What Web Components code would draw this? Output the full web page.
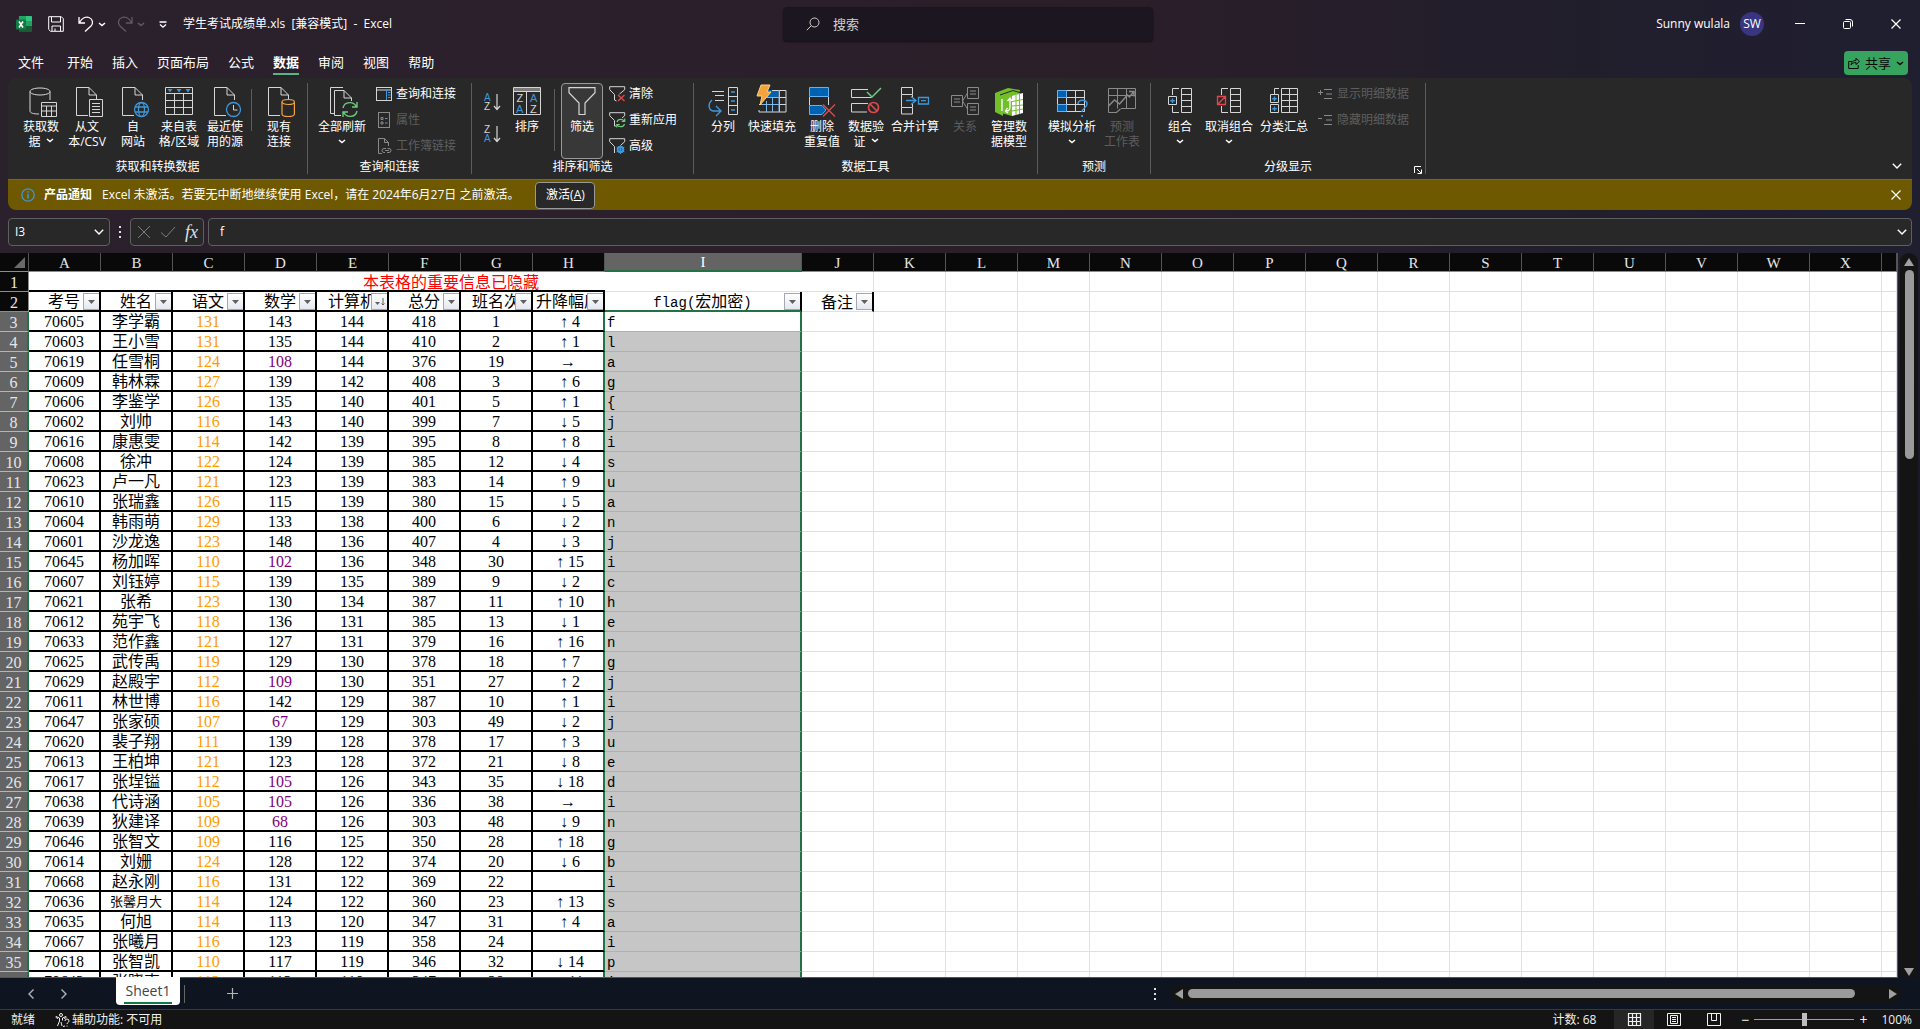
<!DOCTYPE html>
<html lang="zh-CN">
<head>
<meta charset="utf-8">
<title>学生考试成绩单.xls - Excel</title>
<style>
html,body{height:100%;margin:0}
body{overflow:hidden;background:#221e2c;color:#fff;font:12px/16px "Open Sans","Noto Sans CJK SC",sans-serif}
</style>
</head>
<body>
<excel-window></excel-window>
<script>
const RESET = `*{box-sizing:border-box}button{font:inherit;color:inherit;background:none;border:0;padding:0;margin:0}a{color:inherit;text-decoration:none}svg{display:block}`;
function define(name, css, html, after) {
  const tpl = document.createElement('template');
  tpl.innerHTML = `<style>${RESET}${css}</style>${html}`;
  customElements.define(name, class extends HTMLElement {
    constructor() {
      super();
      this.attachShadow({ mode: 'open' }).appendChild(tpl.content.cloneNode(true));
    }
    connectedCallback() { if (after) after(this, this.shadowRoot); }
  });
}
function makeIcon(name, cls) {
  const n = document.createElement('x-icon');
  n.setAttribute('name', name);
  if (cls) n.className = cls;
  return n;
}

/* name: [width, height, markup, optional left inset inside the box] */
const W = '#d6d6d6', B = '#3f97d8', G = '#6ccb7c', R = '#e0474c';
const doc = `<path d="M13 28.5H1.500V.5H14L21.500 8V13M14 .5V8H21.500"/>`;
const ICONS = {
  caret: [8, 5, `<path d="M1 1l3 2.600L7 1" stroke-width="1.500"/>`],
  chevron: [10, 6, `<path d="M.8.8L5 5 9.200.8" stroke-width="1.400"/>`],
  excel: [16, 16, `<g stroke="none"><rect x="3" width="13" height="16" rx="1" fill="#185c37"/><path d="M3 0h7v5H3z" fill="#21a366"/><path d="M10 0h5q1 0 1 1v4h-6z" fill="#33c481"/><path d="M10 5h6v5h-6z" fill="#21a366"/><path d="M3 5h7v5H3z" fill="#107c41"/><rect y="3.500" width="10" height="10" rx="1" fill="#107c41"/></g><path d="M3 5.500l4 6M7 5.500l-4 6" stroke="#fff" stroke-width="1.600"/>`],
  save: [16, 16, `<path d="M.7.7h12.600l2 2v12.600H2.500L.7 13.500zM3.500 1v5h9V1M4 15v-5h8.500v5M7 15v-2.500"/>`],
  undo: [16, 16, `<path d="M1 1v6h6M1.500 6.500C4 2 8 .5 11 1.500c4 1.500 4.500 6 2 8.500l-6 5.500" stroke-width="1.300"/>`],
  redo: [16, 16, `<path d="M15 1v6H9M14.500 6.500C12 2 8 .5 5 1.500 1 3 .5 7.500 3 10l6 5.500" stroke-width="1.300"/>`],
  qat: [8, 7, `<path d="M.5 1h7M1 3.500L4 6.200 7 3.500" stroke-width="1.300"/>`],
  search: [14, 14, `<circle cx="8.500" cy="5.500" r="4.500"/><path d="M5.200 8.800L.8 13.200"/>`],
  min: [10, 10, `<path d="M0 4.500h10"/>`],
  restore: [10, 10, `<rect x=".5" y="2.500" width="7" height="7" rx="1"/><path d="M2.500.5H7q2.500 0 2.500 2.500v4.500"/>`],
  close: [10, 10, `<path d="M.5.5l9 9M9.500.5l-9 9" stroke-width="1.200"/>`],
  share: [12, 12, `<path d="M4 4.500H.7v7h9.500V8M3 8c.5-3.500 2.500-4.500 5-4.500V1.200l3.300 3.300L8 7.500V5.500c-2 0-3.500.5-5 2.500z"/>`],
  getdata: [32, 30, `<path d="M10 27C4 27 1 26 1 24V4.500C1 2.500 5.500 1 11 1s10 1.500 10 3.500V13M1 4.500C1 6.500 5.500 8 11 8s10-1.500 10-3.500"/><path d="M12.500 15.500h15v14h-15zM12.500 19h15M12.500 24h15M17.500 19v11M22.500 19v11"/>`, 4],
  csv: [32, 30, `${doc}<path fill="#282828" d="M14.500 12.500h13v17h-13zM17 16.500h8M17 19.500h8M17 22.500h8M17 25.500h8"/>`, 4],
  web: [32, 30, `${doc}<g stroke="${B}" stroke-width="1.300"><circle fill="#282828" cx="20.500" cy="22.500" r="7"/><ellipse cx="20.500" cy="22.500" rx="3" ry="7"/><path d="M14 20h13M14 25h13"/></g>`, 4],
  table: [28, 30, `<path d="M.5.5h27v27H.5zM.5 6.500h27M.5 13.500h27M.5 20.500h27M9.500 6.500v21M18.500 6.500v21"/><path d="M2.500 2h5L5 5.500zM11.500 2h5L14 5.500zM20.500 2h5L23 5.500z" fill="${B}" stroke="none"/>`],
  recent: [32, 30, `${doc}<circle cx="20.500" cy="22.500" r="7" fill="#282828" stroke="${B}" stroke-width="1.300"/><path d="M20.500 18v5h4"/>`, 4],
  conn: [32, 30, `${doc}<g stroke="#f2a33c" fill="#282828" stroke-width="1.200"><path d="M15 15v12c0 1.500 3 2.500 6.200 2.500s6.200-1 6.200-2.500V15"/><ellipse cx="21.200" cy="15" rx="6.200" ry="2.500"/></g>`, 4],
  refresh: [32, 30, `<path d="M4 26.500H.5V.5H13M11 28.500H4.500V3.500H14L21.500 11v3M14 3.500V11H21.500"/><g stroke="${G}" stroke-width="1.400"><path d="M13 21c1.500-7 11-7 13.500-1M27 15v5h-5M27 24c-1.500 7-11 7-13.500 1M13 30v-5h5"/></g>`, 4],
  queries: [16, 14, `<rect x=".5" y=".5" width="15" height="13"/><path d="M.5 3h15" /><path d="M10.500 3v10M12 5.500h2.500M12 8h2.500M12 10.500h2.500" stroke="${B}"/>`],
  props: [16, 16, `<rect x="2.500" y=".5" width="11" height="15"/><path d="M5 5.500h2v2H5zM5 10h2v2H5zM9 6.500h2.500M9 11h2.500"/>`],
  links: [16, 16, `<path d="M6 15.500H2.500V.5h6l4 4V8M8.500.5v4h4"/><path d="M9 14.500H8a2 2 0 010-4h2M11.500 10.500h1.500a2 2 0 010 4h-2M9 12.500h4"/>`],
  az: [17, 18, `<g stroke="none" font-family="Liberation Sans" font-size="10"><text x="0" y="8" fill="${B}">A</text><text x="0" y="17" fill="${W}">Z</text></g><path d="M13 1v15M10 13l3 3.500 3-3.500" stroke-width="1.200"/>`],
  za: [17, 18, `<g stroke="none" font-family="Liberation Sans" font-size="10"><text x="0" y="8" fill="${W}">Z</text><text x="0" y="17" fill="${B}">A</text></g><path d="M13 1v15M10 13l3 3.500 3-3.500" stroke-width="1.200"/>`],
  sort: [28, 30, `<path d="M.5.5h27v27H.5zM.5 4.500h27M13.500 4.500v23"/><path d="M1 1h26v3H1z" fill="#7c7c7c" stroke="none"/><g stroke="none" font-family="Liberation Sans" font-size="11"><text x="3.500" y="15" fill="${W}">Z</text><text x="3" y="25.500" fill="${B}">A</text><text x="17" y="15" fill="${B}">A</text><text x="17" y="25.500" fill="${W}">Z</text></g>`],
  filter: [28, 30, `<path d="M1 .7h26v5L17 16v11.500h-6V16L1 5.700z" stroke-width="1.200"/>`],
  clear: [16, 16, `<path d="M.7.7h15v3L10.500 8M5.500 14V8.500L.7 3.700V.7M5.500 14l2 1"/><path d="M9 9l6.500 6M15.500 9L9 15" stroke="${R}" stroke-width="1.400"/>`],
  reapply: [16, 16, `<path d="M.7.7h15v3L13 6M5.500 14V8.500L.7 3.700V.7M5.500 14h1.500"/><path d="M8 10c1-3.500 6-3.500 7.500-.5M15.700 6.500v3h-3M15.500 12c-1 3.500-6 3.500-7.500.5M7.800 15.500v-3h3" stroke="${G}" stroke-width="1.200"/>`],
  advanced: [16, 16, `<path d="M.7.7h15v3L12 7M5.500 15V8.500L.7 3.700V.7"/><g stroke="${B}"><circle cx="11.500" cy="11.500" r="2.800" stroke-width="2"/><path d="M11.500 7v9M7.600 9.200l7.800 4.600M15.400 9.200l-7.800 4.600"/></g>`],
  split: [30, 30, `<path d="M4 4.500h12M7 8.500h9M7 13.500h9"/><path d="M20.500.5h9v27h-9zM20.500 9.500h9M20.500 18.500h9"/><path d="M23 5h4M23 14h4M23 23h4" stroke="${B}" stroke-width="1.300"/><path d="M4 13c-4 3-4 10 1 11h7M8 19l5 5-5 5" stroke="${B}" stroke-width="1.400"/>`],
  flash: [30, 30, `<g transform="translate(0 -2)"><path d="M10 5h11v7H10z" fill="#0063b1" stroke="none"/><path d="M2 25v2h27V5.500H15M2 19.500h27M12 12.500h17M22.500 5.500V27"/><path d="M9.500 16v11M15.500 12v15M22 5v22M3 19.500h19M10 12.500h12" stroke="#7db9ec"/><path d="M4 0h9l-3 7h4L3 20l2-9H0z" fill="#f2a33c" stroke="#ffd27a"/></g>`],
  dup: [28, 30, `<path d="M1.500.5h19v9h-19z" fill="#0063b1" stroke="#68b1ee"/><path d="M1.500 10v8M20.500 10v8"/><path d="M1.500 18.500H14l4 4.500-4 4.500H1.500z" fill="#0063b1" stroke="#68b1ee"/><path d="M15 17.500L27 29.500M27 17.500L15 29.500" stroke="${R}" stroke-width="1.400"/>`],
  valid: [30, 30, `<path d="M17 2.500H.5v8h20M17 16.500H.5v8.500H16"/><path d="M16 5l5 5 9-9" stroke="${G}" stroke-width="1.500"/><circle cx="22.500" cy="20.500" r="5" stroke="${R}" stroke-width="1.700"/><path d="M19 17l7 7" stroke="${R}" stroke-width="1.700"/>`],
  consol: [28, 30, `<path d="M.5.5h11v7H.5zM.5 7.500v13h11M.5 20.500v6.500h11v-6.500M11.500 8v2M11.500 17v3"/><path d="M5 13.500h10M10 9.500l5 4-5 4M17.500 10.500h10v6.500h-10zM20 13.700h5" stroke="${B}" stroke-width="1.300"/>`],
  relation: [28, 30, `<path d="M.5 8.500h11v11H.5zM16.500.5h11v11h-11zM16.500 16.500h11v11h-11zM3 12h6M3 15h6M19 4h6M19 7h6M19 20h6M19 23h6M11.500 14l5-8M11.500 14l5 8"/>`],
  model: [30, 30, `<path d="M1 6L14 1l12 2-1 4-12 3-4 5v14L1 25z" fill="#72bf2b" stroke="none"/><path d="M7 8l13-5 9 5v16l-11 5-11-3z" fill="#72bf2b" stroke="none"/><path d="M6 8l13-4.500 10 3" stroke="#282828"/><path d="M18 9l11-3v20l-11 3z" fill="#fff" stroke="none"/><path d="M18 14.500l11-2M18 19l11-1M18 24l11-2M22 8v20M25.500 7v20" stroke="#72bf2b"/><path d="M8 12v12M12 24c4 0 4-2 4-6v-6M13.500 14l2.500-3 2 3M13.500 21l-2 3 2.500 2" stroke="#fff" stroke-width="1.300"/>`],
  whatif: [30, 30, `<path d="M.5 3.500h27v21H.5zM.5 10.500h27M.5 17.500h27M9.500 3.500v21M18.500 3.500v21"/><path d="M.5 3.500h9v7h-9zM.5 17.500h9v7h-9z" fill="#0063b1" stroke="#68b1ee"/><path d="M21 17c0-5 9-5 9 0 0 4-5 4-5 8" stroke="${B}" stroke-width="1.500"/><path d="M24.200 28h1.800v2h-1.800z" fill="${B}" stroke="none"/>`],
  forecast: [28, 30, `<path d="M.5 1.500h27v20H13l-4 4H.5zM.5 8.500h27M9.500 1.500v20M18.500 1.500v20M8 25.500l4-3.500"/><path d="M.5 19l6-6 5 4 8-9 2 2 4-5M21 4.500h5v5" stroke-width="1.500"/>`],
  group: [26, 30, `<path d="M14.500 1.500h10v24h-10zM14.500 7.500h10M14.500 13.500h10M14.500 19.500h10M12 1.500H5.500V8M5.500 19v6.500H12"/><path d="M1.500 9.500h8v8h-8z"/><path d="M5.500 11.500v4.500M3.300 13.700h4.500" stroke="${B}" stroke-width="1.400"/>`],
  ungroup: [26, 30, `<path d="M14.500 1.500h10v24h-10zM14.500 7.500h10M14.500 13.500h10M14.500 19.500h10M12 1.500H5.500V8M5.500 19v6.500H12"/><path d="M1.500 9.500h8v8h-8zM1.500 17.500l8-8" stroke="${R}" stroke-width="1.300"/>`],
  subtotal: [30, 30, `<path d="M12.500 1.500h16v24h-16zM12.500 7.500h16M12.500 13.500h16M12.500 19.500h16M20.500 1.500v24M10 1.500H5.500V7"/><path d="M1.500 7.500h8v8h-8zM1.500 17.500h8v8h-8z"/><path d="M5.500 9.500v4.500M3.300 11.700h4.500M5.500 19.500v4.500M3.300 21.700h4.500" stroke="${B}" stroke-width="1.400"/>`],
  show: [15, 12, `<path d="M0 4.500h5M2.500 2v5M6 1.500h8M8 6h6M6 10.500h8"/>`],
  hide: [15, 12, `<path d="M0 4.500h4M6 1.500h8M8 6h6M6 10.500h8"/>`],
  launcher: [8, 8, `<path d="M.5 7V.5H7M3 3l4 4M7.500 3.500v4h-4"/>`],
  info: [14, 14, `<circle cx="7" cy="7" r="6.200" stroke="${B}" stroke-width="1.300"/><path d="M7 6v4.500M7 3.200v1.500" stroke="${B}" stroke-width="1.500"/>`],
  cancel: [14, 14, `<path d="M1 1l12 12M13 1L1 13"/>`],
  check: [16, 12, `<path d="M1 6.500L6 11 15 1"/>`],
  dots: [2, 12, `<path d="M0 0h2v2H0zM0 5h2v2H0zM0 10h2v2H0z" fill="#e0e0e0" stroke="none"/>`],
  left: [6, 10, `<path d="M5.500.5L1 5l4.500 4.500" stroke-width="1.400"/>`],
  right: [6, 10, `<path d="M.5.5L5 5 .5 9.500" stroke-width="1.400"/>`],
  plus: [11, 11, `<path d="M5.500 0v11M0 5.500h11" stroke-width="1.200"/>`],
  access: [15, 14, `<circle cx="6" cy="2" r="1.500"/><path d="M1 3.500l3.500 1.500v3L2.500 13M11 3.500L7.500 5v2.500M1 3.500c-.5 1 .5 1.500 2 2M11 3.500c1 1-.5 1.500-2 2M6 9l1 4"/><path d="M10 8a2 2 0 014 0c0 1.500-2 1.500-2 3M12 12.500v1M10 13l-2 .5"/>`],
  normal: [13, 13, `<path d="M.5.5h12v12H.5zM4.500.5v12M8.500.5v12M.5 4.500h12M.5 8.500h12" stroke-width="1.200"/>`],
  page: [14, 13, `<path d="M.5.5h13v12H.5zM3.500 2.500h7v8h-7zM5 4.500h4M5 6.500h4M5 8.500h4"/>`],
  breaks: [14, 13, `<path d="M.5.5h13v12H.5zM4.500.5v7M9.500.5v7h-5M9.500 7.500V.5"/>`],
  corner: [11, 11, `<path d="M11 0v11H0z" fill="#6a6a6a" stroke="none"/>`],
  up: [10, 8, `<path d="M5 0l5 8H0z" fill="#a0a0a0" stroke="none"/>`],
  down: [10, 8, `<path d="M0 0h10L5 8z" fill="#a0a0a0" stroke="none"/>`],
  back: [8, 10, `<path d="M8 0v10L0 5z" fill="#a0a0a0" stroke="none"/>`],
  next: [8, 10, `<path d="M0 0l8 5-8 5z" fill="#a0a0a0" stroke="none"/>`],
  drop: [7, 4, `<path d="M0 0h7L3.500 4z" fill="#606060" stroke="none"/>`],
  sorted: [10, 8, `<path d="M0 4h5L2.500 7z" fill="#606060" stroke="none"/><path d="M8 0v7M6.500 5.500L8 7l1.500-1.500" stroke="#606060"/>`]
};
define('x-icon', ':host{display:block;flex:none;width:fit-content}div{display:block}svg{fill:none;stroke:currentColor;overflow:visible}', '<div></div>', (el, root) => {
  const [w, h, m, inset = 0] = ICONS[el.getAttribute('name')];
  root.querySelector('div').innerHTML = `<svg width="${w}" height="${h}" viewBox="${-inset} 0 ${w} ${h}" aria-hidden="true">${m}</svg>`;
});

define('title-bar', `
:host{display:flex;height:48px;align-items:center;padding-left:16px}
.left,.right{flex:1;display:flex;align-items:center}
.left button{margin-left:16px}
.left .undo{margin-left:14px}
.left .redo{margin-left:11px}
.left .c{margin-left:4px}
h1{font-size:12px;line-height:16px;font-weight:400;margin:0 0 0 16px;white-space:pre}
.search{width:370px;height:34px;display:flex;align-items:center;gap:13px;padding-left:22px;background:#1c1620;border:1px solid #1a151e;border-radius:4px;box-shadow:0 1px 2px #0008;color:#cfcfcf}
.search input{flex:1;min-width:0;border:0;background:none;font:inherit;font-size:13px;color:#d0d0d0;outline:0;padding:0}
.search input::placeholder{color:#d0d0d0;opacity:1}
.right{justify-content:flex-end}
.avatar{width:24px;height:24px;border-radius:50%;background:#393580;margin:0 12px 0 10px;text-align:center;line-height:24px}
.win{width:48px;height:48px;display:grid;place-items:center}
.off{color:#605a62}`,
`<div class="left"><x-icon name="excel"></x-icon>
<button aria-label="保存"><x-icon name="save"></x-icon></button>
<button class="undo" aria-label="撤消"><x-icon name="undo"></x-icon></button><button class="c" aria-label="撤消列表"><x-icon name="caret"></x-icon></button>
<button class="redo off" aria-label="恢复"><x-icon name="redo"></x-icon></button><button class="c off" aria-label="恢复列表"><x-icon name="caret"></x-icon></button>
<button class="undo" aria-label="自定义快速访问工具栏"><x-icon name="qat"></x-icon></button>
<h1>学生考试成绩单.xls  [兼容模式]  -  Excel</h1></div>
<label class="search"><x-icon name="search"></x-icon><input type="text" placeholder="搜索" aria-label="搜索"></label>
<div class="right"><span>Sunny wulala</span><span class="avatar">SW</span>
<button class="win" aria-label="最小化"><x-icon name="min"></x-icon></button><button class="win" aria-label="还原"><x-icon name="restore"></x-icon></button><button class="win" aria-label="关闭"><x-icon name="close"></x-icon></button></div>`);

define('menu-tabs', `
:host{display:flex;height:30px;padding:0 12px 0 18px;align-items:flex-start}
nav{flex:1;display:flex;gap:19px;font-size:13px;line-height:20px}
nav a{padding-top:4px;height:27px}
nav a:first-child{margin-right:4px}
nav a.on{font-weight:700;border-bottom:2px solid #55b680}
.share{display:flex;align-items:center;justify-content:center;gap:5px;width:64px;height:24px;margin-top:3px;border-radius:4px;background:#36a35f;color:#0a0a0a;font-size:13px}`,
`<nav><a href="#">文件</a><a href="#">开始</a><a href="#">插入</a><a href="#">页面布局</a><a href="#">公式</a><a href="#" class="on">数据</a><a href="#">审阅</a><a href="#">视图</a><a href="#">帮助</a></nav>
<button class="share"><x-icon name="share"></x-icon>共享<x-icon name="caret"></x-icon></button>`);

define('ribbon-group', `
:host{display:flex;flex-direction:column;flex:none;position:relative;height:91px;margin-top:5px;border-right:1px solid #5c5c5c}
.row{display:flex;height:78px;align-items:flex-start}
.name{text-align:center;line-height:16px}
.launch{position:absolute;right:3px;bottom:0}`,
`<div class="row"><slot></slot></div><div class="name"></div>`, (el, root) => {
  root.querySelector('.name').textContent = el.getAttribute('label');
  el.style.width = el.getAttribute('width') + 'px';
  root.querySelector('.row').style.paddingLeft = el.getAttribute('inset') + 'px';
  if (el.hasAttribute('launcher')) {
    const b = document.createElement('button');
    b.className = 'launch';
    b.setAttribute('aria-label', '分级显示设置');
    b.append(makeIcon('launcher'));
    root.append(b);
  }
});

define('ribbon-button', `
:host{display:block;flex:none}
button{width:100%;height:76px;display:flex;flex-direction:column;align-items:center;padding-top:4px;line-height:15px;text-align:center;white-space:nowrap;border-radius:4px}
x-icon.main{height:32px;color:#d6d6d6}
:host([off]) button{color:#5e5e5e}:host([off]) x-icon{color:#8a8a8a}
:host([on]) button{background:#383838;border:1px solid #9a9a9a;padding-top:3px}`,
`<button><i></i><span><slot></slot></span></button>`, (el, root) => {
  root.querySelector('i').replaceWith(makeIcon(el.getAttribute('icon'), 'main'));
  el.style.width = el.getAttribute('width') + 'px';
});
define('ribbon-item', `
:host{display:block}
button{display:flex;align-items:center;gap:4px;height:26px;white-space:nowrap}
x-icon{color:#d6d6d6}
:host([off]) button{color:#5e5e5e}:host([off]) x-icon{color:#8a8a8a}`,
`<button><i></i><slot></slot></button>`, (el, root) => {
  root.querySelector('i').replaceWith(makeIcon(el.getAttribute('icon')));
});

define('ribbon-bar', `
:host{display:flex;position:relative;height:101px;margin:0 8px;background:#282828;border-radius:8px 8px 0 0}
.col{display:flex;flex-direction:column;margin:-2px 0 0 4px}
.col.sorts{gap:6px;margin:6px 0 0}
.col.near{margin-left:6px}
.col.far{margin-left:9px}
.rule{width:1px;height:62px;background:#5c5c5c;flex:none;margin:6px 6px 0 1px}
.rule.short{height:42px;margin:6px 4px 0 3px}
x-icon[name=caret]{margin:5px auto}
x-icon.in[name=caret]{display:inline-block;margin:0 0 3px 5px}
.collapse{position:absolute;right:10px;bottom:10px}`,
`<ribbon-group label="获取和转换数据" width="300" inset="10">
<ribbon-button icon="getdata" width="46">获取数<br>据<x-icon class="in" name="caret"></x-icon></ribbon-button>
<ribbon-button icon="csv" width="46">从文<br>本/CSV</ribbon-button>
<ribbon-button icon="web" width="46">自<br>网站</ribbon-button>
<ribbon-button icon="table" width="46">来自表<br>格/区域</ribbon-button>
<ribbon-button icon="recent" width="46">最近使<br>用的源</ribbon-button>
<span class="rule short"></span>
<ribbon-button icon="conn" width="46">现有<br>连接</ribbon-button></ribbon-group>
<ribbon-group label="查询和连接" width="164" inset="4">
<ribbon-button icon="refresh" width="60">全部刷新<x-icon name="caret"></x-icon></ribbon-button>
<div class="col"><ribbon-item icon="queries">查询和连接</ribbon-item><ribbon-item icon="props" off>属性</ribbon-item><ribbon-item icon="links" off>工作簿链接</ribbon-item></div></ribbon-group>
<ribbon-group label="排序和筛选" width="222" inset="12">
<div class="col sorts"><ribbon-item icon="az"></ribbon-item><ribbon-item icon="za"></ribbon-item></div>
<ribbon-button icon="sort" width="52">排序</ribbon-button>
<span class="rule"></span>
<ribbon-button icon="filter" width="42" on>筛选</ribbon-button>
<div class="col near"><ribbon-item icon="clear">清除</ribbon-item><ribbon-item icon="reapply">重新应用</ribbon-item><ribbon-item icon="advanced">高级</ribbon-item></div></ribbon-group>
<ribbon-group label="数据工具" width="344" inset="10">
<ribbon-button icon="split" width="38">分列</ribbon-button>
<ribbon-button icon="flash" width="60">快速填充</ribbon-button>
<ribbon-button icon="dup" width="40">删除<br>重复值</ribbon-button>
<ribbon-button icon="valid" width="48">数据验<br>证<x-icon class="in" name="caret"></x-icon></ribbon-button>
<ribbon-button icon="consol" width="50">合并计算</ribbon-button>
<ribbon-button icon="relation" width="50" off>关系</ribbon-button>
<ribbon-button icon="model" width="38">管理数<br>据模型</ribbon-button></ribbon-group>
<ribbon-group label="预测" width="113" inset="9">
<ribbon-button icon="whatif" width="50">模拟分析<x-icon name="caret"></x-icon></ribbon-button>
<ribbon-button icon="forecast" width="50" off>预测<br>工作表</ribbon-button></ribbon-group>
<ribbon-group label="分级显示" width="275" inset="10" launcher>
<ribbon-button icon="group" width="38">组合<x-icon name="caret"></x-icon></ribbon-button>
<ribbon-button icon="ungroup" width="60">取消组合<x-icon name="caret"></x-icon></ribbon-button>
<ribbon-button icon="subtotal" width="50">分类汇总</ribbon-button>
<div class="col far"><ribbon-item icon="show" off>显示明细数据</ribbon-item><ribbon-item icon="hide" off>隐藏明细数据</ribbon-item></div></ribbon-group>
<button class="collapse" aria-label="折叠功能区"><x-icon name="chevron"></x-icon></button>`);

define('notice-bar', `
:host{display:flex;align-items:center;height:31px;margin:0 8px;padding:0 11px 0 13px;background:#6e5800;border-top:1px solid #666;border-radius:0 0 8px 8px;color:#fff}
b{margin:0 10px 0 9px}
.act{width:60px;height:27px;margin-left:16px;background:#282828;border:1px solid #999;border-radius:4px}
.x{margin-left:auto}`,
`<x-icon name="info"></x-icon><b>产品通知</b><span>Excel 未激活。若要无中断地继续使用 Excel，请在 2024年6月27日 之前激活。</span><button class="act">激活(<u>A</u>)</button><button class="x" aria-label="关闭通知"><x-icon name="close"></x-icon></button>`);

define('formula-bar', `
:host{display:flex;align-items:center;height:28px;margin:8px 8px 7px}
.box{height:28px;background:#282828;border:1px solid #5f5f5f;border-radius:4px;display:flex;align-items:center}
input{flex:1;min-width:0;border:0;outline:0;background:none;color:#fff;font:inherit;padding:0}
.name{width:102px;padding:0 5px 0 6px}
.tools{width:74px;gap:9px;padding-left:6px;margin-right:4px;color:#7d7d7d}
.tools button:last-child{font:italic 18px/20px "Liberation Serif",serif;color:#e0e0e0}
x-icon[name=dots]{margin:0 9px}
.text{flex:1;padding:0 4px 0 11px}`,
`<div class="box name"><input type="text" value="I3" aria-label="名称框"><x-icon name="chevron"></x-icon></div><x-icon name="dots"></x-icon>
<div class="box tools"><button aria-label="取消"><x-icon name="cancel"></x-icon></button><button aria-label="输入"><x-icon name="check"></x-icon></button><button>fx</button></div>
<div class="box text"><input type="text" value="f" aria-label="编辑栏"><x-icon name="chevron"></x-icon></div>`);

const DATA = `70605 李学霸 131 143 144 418 1 ↑4 f
70603 王小雪 131 135 144 410 2 ↑1 l
70619 任雪桐 124 108 144 376 19 → a
70609 韩林霖 127 139 142 408 3 ↑6 g
70606 李鉴学 126 135 140 401 5 ↑1 {
70602 刘帅 116 143 140 399 7 ↓5 j
70616 康惠雯 114 142 139 395 8 ↑8 i
70608 徐冲 122 124 139 385 12 ↓4 s
70623 卢一凡 121 123 139 383 14 ↑9 u
70610 张瑞鑫 126 115 139 380 15 ↓5 a
70604 韩雨萌 129 133 138 400 6 ↓2 n
70601 沙龙逸 123 148 136 407 4 ↓3 j
70645 杨加晖 110 102 136 348 30 ↑15 i
70607 刘钰婷 115 139 135 389 9 ↓2 c
70621 张希 123 130 134 387 11 ↑10 h
70612 苑宇飞 118 136 131 385 13 ↓1 e
70633 范作鑫 121 127 131 379 16 ↑16 n
70625 武传禹 119 129 130 378 18 ↑7 g
70629 赵殿宇 112 109 130 351 27 ↑2 j
70611 林世博 116 142 129 387 10 ↑1 i
70647 张家硕 107 67 129 303 49 ↓2 j
70620 裴子翔 111 139 128 378 17 ↑3 u
70613 王柏坤 121 123 128 372 21 ↓8 e
70617 张埕镒 112 105 126 343 35 ↓18 d
70638 代诗涵 105 105 126 336 38 → i
70639 狄建译 109 68 126 303 48 ↓9 n
70646 张智文 109 116 125 350 28 ↑18 g
70614 刘姗 124 128 122 374 20 ↓6 b
70668 赵永刚 116 131 122 369 22 - i
70636 张馨月大 114 124 122 360 23 ↑13 s
70635 何旭 114 113 120 347 31 ↑4 a
70667 张曦月 116 123 119 358 24 - i
70618 张智凯 110 117 119 346 32 ↓14 p
70643 张晓声 112 113 119 347 28 ↑11 i`.split('\n').map(r => r.split(' '));

define('sheet-grid', `
:host{display:block;flex:1;min-width:0;overflow:hidden;background:#fff;color:#000;border-bottom:1px solid #555;border-right:1px solid #555;font:400 16px/18px "Liberation Serif","Noto Sans CJK SC",serif}
table{table-layout:fixed;border-collapse:separate;border-spacing:0;width:100%}
th,td{padding:0;height:20px;overflow:hidden;white-space:nowrap;text-align:center;font-weight:inherit;border-right:1px solid #e0e0e0;border-bottom:1px solid #e0e0e0}
td,tbody th{padding-top:2px;line-height:16px}
thead th{height:19px;padding-top:1px;line-height:16px;font-size:15px;background:#090909;color:#e6e6e6;border-color:#8c8c8c;border-right-color:#555}
thead th.sel{background:#646464;color:#fff;border-bottom:2px solid #217346}
thead x-icon{margin:0 0 0 14px}
tbody th{background:#090909;color:#e6e6e6;border-color:#8c8c8c}
tbody th.sel{background:#646464;border-bottom-color:#b5b5b5;border-right:2px solid #217346}
td.k{border-right:2px solid #000;border-bottom:2px solid #000}
.heads td{position:relative}
.heads .k{box-shadow:0 -2px 0 #000}
.heads .r{border-right:2px solid #000}
.heads .flag{border-bottom:2px solid #217346}
.heads button{position:absolute;right:-1px;top:1px;width:17px;height:17px;display:grid;place-items:center;border:1px solid #a3a9b3;background:linear-gradient(#fff,#e4e8ee)}
.title{color:#f00}
.o{color:#ff9a00}.p{color:#800080}
td.h{border-right-color:#217346}
.s{font-size:13px}
i{font-style:normal;margin:0 4px}
.m{font:14px/0 "Liberation Mono",monospace}
td.f{text-align:left;padding:0 0 0 2px;line-height:18px;background:#c6c6c6;border-right:2px solid #217346;border-bottom-color:#b0b0b0}
td.f.first{background:#fff}`,
`<table></table>`, (el, root) => {
  const cols = 'ABCDEFGHIJKLMNOPQRSTUVWX'.split('');
  const blanks = n => '<td></td>'.repeat(n);
  let h = `<colgroup><col style="width:29px">${cols.map(c => `<col style="width:${c === 'I' ? 197 : 72}px">`).join('')}<col></colgroup>`;
  h += `<thead><tr><th><x-icon name="corner"></x-icon></th>${cols.map(c => `<th${c === 'I' ? ' class="sel"' : ''}>${c}</th>`).join('')}<th></th></tr></thead><tbody>`;
  h += `<tr><th>1</th><td class="title" colspan="10">本表格的重要信息已隐藏</td>${blanks(15)}</tr><tr class="heads"><th>2</th>`;
  ['考号', '姓名', '语文', '数学', '计算机', '总分', '班名次', '升降幅度', '<span class="m">flag(</span>宏加密<span class="m">)</span>', '备注'].forEach((t, i) => {
    h += `<td class="${i < 8 ? 'k' : i === 8 ? 'r flag' : 'r'}">${t}<button aria-label="筛选"><x-icon name="${i === 4 ? 'sorted' : 'drop'}"></x-icon></button></td>`;
  });
  h += blanks(15) + '</tr>';
  DATA.forEach((r, n) => {
    h += `<tr><th class="sel">${n + 3}</th>`;
    r.forEach((v, i) => {
      if (i === 8) { h += `<td class="f${n ? '' : ' first'}"><span class="m">${v}</span></td>`; return; }
      const c = i === 2 ? ' o' : i === 3 && +v < 110 ? ' p' : i === 7 ? ' h' : i === 1 && v.length > 3 ? ' s' : '';
      if (i === 7) v = v === '-' ? '' : `<i>${v[0]}</i>${v.slice(1)}`;
      h += `<td class="k${c}">${v}</td>`;
    });
    h += blanks(16) + '</tr>';
  });
  root.querySelector('table').innerHTML = h + '</tbody>';
});

define('scroll-track', `
:host{display:flex;align-items:center;background:#141414;border-radius:9px;flex:none}
:host([dir=v]){flex-direction:column;width:18px;padding:5px 0 2px;margin:0 2px 0 2px}
:host([dir=h]){width:730px;height:18px;padding:0 4px 0 4px}
.thumb{background:#9a9a9a;border-radius:5px}
:host([dir=v]) .thumb{width:9px;height:189px;margin:4px 0 auto}
:host([dir=h]) .thumb{height:9px;width:667px;margin:0 auto 0 5px}`,
`<div class="thumb"></div>`, (el, root) => {
  const [a, b] = el.getAttribute('dir') === 'v' ? ['up', 'down'] : ['back', 'next'];
  root.querySelector('.thumb').before(makeIcon(a));
  root.append(makeIcon(b));
});

define('sheet-tabs', `
:host{display:flex;align-items:center;height:31px;padding:0 19px 0 28px;background:#0f1520;color:#b5b5b5}
.prev{margin-right:27px}
.tab{align-self:flex-start;width:64px;height:28px;margin:-1px 0 0 49px;padding:1px 8px 0;background:#fff;border-radius:0 0 4px 4px;color:#444;font-size:14px;line-height:22px;text-align:center}
.tab span{display:block;border-bottom:2px solid #107c41}
.bar{width:1px;height:18px;background:#666;margin:0 42px 0 4px}
x-icon[name=dots]{margin:0 15px 0 auto}`,
`<button class="prev" aria-label="上一个"><x-icon name="left"></x-icon></button><button aria-label="下一个"><x-icon name="right"></x-icon></button>
<button class="tab"><span>Sheet1</span></button><div class="bar"></div><button aria-label="新工作表"><x-icon name="plus"></x-icon></button>
<x-icon name="dots"></x-icon><scroll-track dir="h"></scroll-track>`);

define('status-bar', `
:host{display:flex;align-items:center;height:20px;padding:0 8px 0 11px;background:#141414;border-top:1px solid #3a3a3a;color:#f0f0f0}
.acc{display:flex;gap:2px;align-items:center;margin-left:20px}
.count{margin:0 18px 0 auto}
.v{width:40px;height:19px;display:grid;place-items:center}
.v.on{background:#262626}
.z{width:10px;line-height:16px;font-size:14px}
.v + .z{margin-left:6px}
input{appearance:none;width:100px;height:14px;margin:0 4px;background:linear-gradient(#a0a0a0,#a0a0a0) center/100% 1px no-repeat}
input::-webkit-slider-thumb{appearance:none;width:5px;height:13px;background:#bdbdbd}
.pct{margin-left:13px}`,
`<span>就绪</span><span class="acc"><x-icon name="access"></x-icon>辅助功能: 不可用</span><span class="count">计数: 68</span>
<button class="v on" aria-label="普通"><x-icon name="normal"></x-icon></button><button class="v" aria-label="页面布局"><x-icon name="page"></x-icon></button><button class="v" aria-label="分页预览"><x-icon name="breaks"></x-icon></button>
<button class="z" aria-label="缩小">−</button><input type="range" aria-label="显示比例" value="50"><button class="z" aria-label="放大">+</button><span class="pct">100%</span>`);

define('excel-window', `
:host{display:flex;flex-direction:column;height:100vh;background:linear-gradient(90deg,#2b212d,#2a1e29 60%,#221e2c 80%,#1f1f30)}
.work{flex:1;min-height:0;display:flex;background:linear-gradient(#1f1d2e,#10131f)}`,
`<title-bar></title-bar><menu-tabs></menu-tabs><ribbon-bar></ribbon-bar><notice-bar></notice-bar><formula-bar></formula-bar>
<div class="work"><sheet-grid></sheet-grid><scroll-track dir="v"></scroll-track></div><sheet-tabs></sheet-tabs><status-bar></status-bar>`);
</script>
</body>
</html>
